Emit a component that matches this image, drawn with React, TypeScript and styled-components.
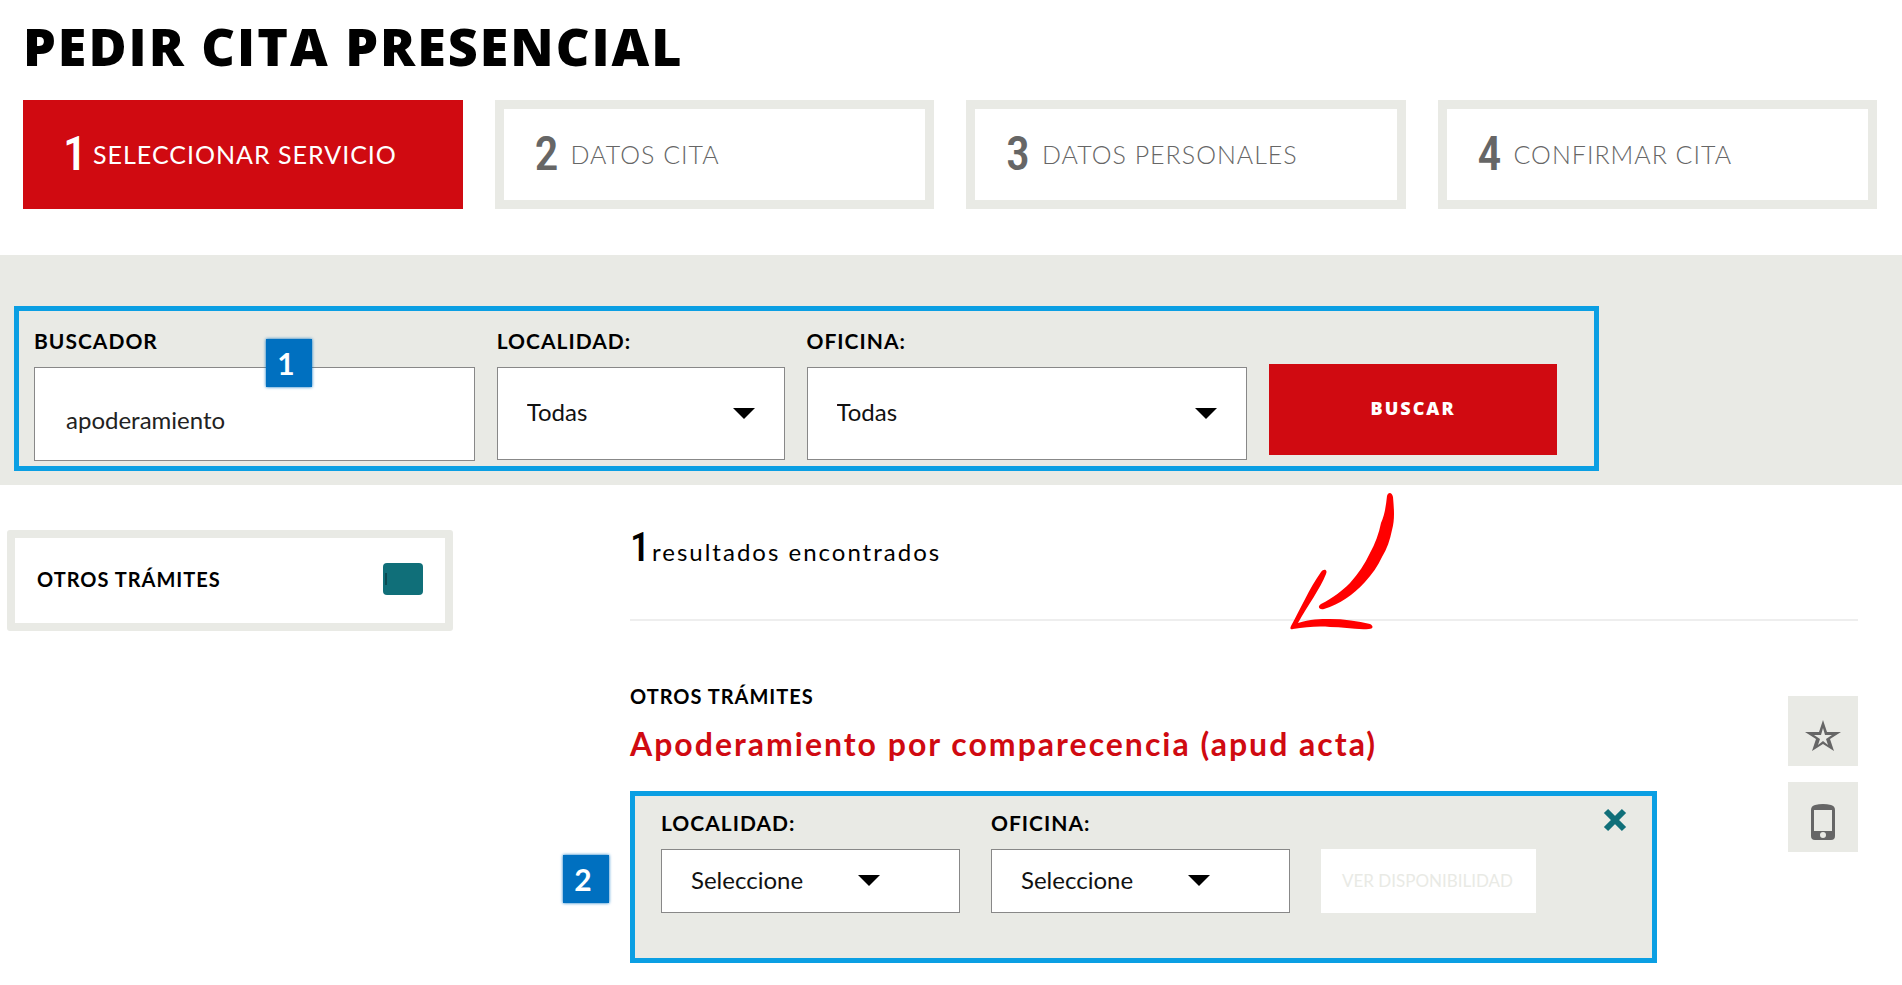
import React from "react";
import styled, { createGlobalStyle } from "styled-components";

const c = {
  red: "#d00a11",
  grey: "#e9eae5",
  blue: "#0b9fe3",
  badge: "#0070c0",
  teal: "#106f79",
  line: "#eeeeee",
  dim: "#666666",
};

const Global = createGlobalStyle`
  *, *::before, *::after { box-sizing: border-box; }
  body {
    margin: 0;
    background: #fff;
    color: #000;
    font-family: Lato, "Open Sans", sans-serif;
  }
  button, input, select { font-family: inherit; }
`;

const Header = styled.header`
  padding: 16px 25px 46px 23px;
`;

const Title = styled.h1`
  margin: 0 0 24px;
  font-family: "Open Sans", Lato, sans-serif;
  font-size: 52px;
  line-height: 60px;
  font-weight: 800;
  letter-spacing: 2px;
`;

const Steps = styled.ol`
  display: grid;
  grid-template-columns: repeat(4, 1fr);
  gap: 32px;
  margin: 0;
  padding: 0;
  list-style: none;
`;

const Step = styled.li<{ $active?: boolean }>`
  display: flex;
  align-items: center;
  gap: ${(p) => (p.$active ? 6 : 12)}px;
  height: 109px;
  padding: 0 0 2px 31px;
  border: 9px solid ${(p) => (p.$active ? c.red : c.grey)};
  background: ${(p) => (p.$active ? c.red : "#fff")};
  color: ${(p) => (p.$active ? "#fff" : c.dim)};
  font-size: 25px;
  font-weight: ${(p) => (p.$active ? 400 : 300)};
  letter-spacing: 1px;
`;

const Numeral = styled.span<{ $size: number }>`
  font-family: "Roboto Condensed", Roboto, sans-serif;
  font-size: ${(p) => p.$size}px;
  font-weight: 500;
  line-height: 36px;
  letter-spacing: 0;
`;

const Band = styled.section`
  padding: 51px 303px 14px 14px;
  background: ${c.grey};
`;

const SearchForm = styled.form`
  position: relative;
  display: grid;
  grid-template-columns: 441fr 288fr 441fr 288fr;
  align-items: start;
  gap: 22px;
  padding: 16px 37px 5px 15px;
  border: 5px solid ${c.blue};
`;

const Field = styled.div`
  display: flex;
  flex-direction: column;
  gap: 12px;
`;

const Label = styled.label`
  font-size: 21px;
  line-height: 28px;
  font-weight: 700;
  letter-spacing: 1px;
`;

const TextInput = styled.input`
  width: 100%;
  height: 94px;
  padding: 10px 31px 0;
  border: 1px solid #888;
  border-radius: 0;
  background: #fff;
  color: #222;
  font-size: 24px;
`;

const SelectBox = styled.div`
  position: relative;
  display: flex;
`;

const Select = styled.select<{ $h: number }>`
  appearance: none;
  width: 100%;
  height: ${(p) => p.$h}px;
  padding: 0 60px 4px 29px;
  border: 1px solid #888;
  border-radius: 0;
  background: #fff;
  color: #111;
  font-size: 24px;
`;

const Caret = styled.svg<{ $right: number }>`
  position: absolute;
  top: 50%;
  right: ${(p) => p.$right}px;
  margin-top: -6px;
  pointer-events: none;
`;

const SearchButton = styled.button`
  height: 91px;
  margin-top: 37px;
  padding-bottom: 4px;
  border: 0;
  background: ${c.red};
  color: #fff;
  font-family: "Open Sans", Lato, sans-serif;
  font-size: 18px;
  font-weight: 800;
  letter-spacing: 2px;
`;

const Badge = styled.span<{ $left: number; $top: number }>`
  position: absolute;
  left: ${(p) => p.$left}px;
  top: ${(p) => p.$top}px;
  display: flex;
  align-items: center;
  justify-content: center;
  width: 46px;
  height: 48px;
  padding-right: 6px;
  background: ${c.badge};
  box-shadow: 0 0 3px ${c.badge};
  color: #fff;
  font-size: 30px;
  font-weight: 700;
`;

const Main = styled.main`
  display: grid;
  grid-template-columns: 446px 1fr;
  align-items: start;
  gap: 177px;
  padding: 45px 44px 22px 7px;
`;

const FilterCard = styled.aside`
  display: flex;
  align-items: center;
  justify-content: space-between;
  height: 101px;
  padding: 0 22px 4px;
  border: 8px solid ${c.grey};
  border-radius: 3px;
`;

const Category = styled.h2`
  margin: 0;
  font-size: 20px;
  line-height: 28px;
  font-weight: 700;
  letter-spacing: 1px;
`;

const Toggle = styled.button`
  display: flex;
  align-items: center;
  width: 40px;
  height: 32px;
  padding: 0 0 0 2px;
  border: 0;
  border-radius: 4px;
  background: ${c.teal};

  &::before {
    content: "";
    width: 2px;
    height: 12px;
    background: #0a4a52;
  }
`;

const Results = styled.section`
  position: relative;
`;

const Count = styled.p`
  display: flex;
  align-items: baseline;
  gap: 2px;
  height: 91px;
  margin: 0;
  border-bottom: 2px solid ${c.line};
  font-size: 24px;
  line-height: 36px;
  letter-spacing: 2px;
`;

const Arrow = styled.svg`
  position: absolute;
  left: 660px;
  top: -37px;
`;

const Item = styled.article`
  display: flex;
  gap: 131px;
  padding-top: 61px;
`;

const ItemBody = styled.div`
  flex: 1;
`;

const ItemTitle = styled.h3`
  margin: 14px 0 27px;
  color: ${c.red};
  font-size: 32px;
  line-height: 40px;
  font-weight: 700;
  letter-spacing: 2px;
`;

const BookingForm = styled.form`
  position: relative;
  display: grid;
  grid-template-columns: 299px 299px 215px;
  align-items: start;
  gap: 31px;
  height: 172px;
  padding: 13px 26px;
  border: 5px solid ${c.blue};
  background: ${c.grey};
`;

const CheckButton = styled.button`
  height: 64px;
  margin-top: 40px;
  padding: 0 2px 2px 0;
  border: 0;
  background: #fff;
  color: ${c.grey};
  font-size: 17px;
`;

const Close = styled.button`
  position: absolute;
  top: 12px;
  right: 25px;
  display: flex;
  padding: 0;
  border: 0;
  background: none;
`;

const Actions = styled.div`
  display: flex;
  flex-direction: column;
  gap: 16px;
  padding-top: 14px;
`;

const Action = styled.button`
  display: flex;
  align-items: center;
  justify-content: center;
  width: 70px;
  height: 70px;
  padding: 10px 0 0;
  border: 0;
  background: ${c.grey};
`;

interface DropdownProps {
  id: string;
  label: string;
  value: string;
  height: number;
  caretRight: number;
}

function Dropdown({ id, label, value, height, caretRight }: DropdownProps) {
  return (
    <Field>
      <Label htmlFor={id}>{label}</Label>
      <SelectBox>
        <Select id={id} $h={height}>
          <option>{value}</option>
        </Select>
        <Caret $right={caretRight} width="22" height="11" viewBox="0 0 22 11" aria-hidden="true">
          <path d="M0 0H22L11 11Z" />
        </Caret>
      </SelectBox>
    </Field>
  );
}

const steps = ["SELECCIONAR SERVICIO", "DATOS CITA", "DATOS PERSONALES", "CONFIRMAR CITA"];

export default function App() {
  return (
    <>
      <Global />
      <Header>
        <Title>PEDIR CITA PRESENCIAL</Title>
        <Steps>
          {steps.map((name, i) => (
            <Step key={name} $active={i === 0} aria-current={i === 0 ? "step" : undefined}>
              <Numeral $size={48}>{i + 1}</Numeral>
              {name}
            </Step>
          ))}
        </Steps>
      </Header>

      <Band>
        <SearchForm onSubmit={(e) => e.preventDefault()}>
          <Field>
            <Label htmlFor="query">BUSCADOR</Label>
            <TextInput id="query" type="text" defaultValue="apoderamiento" />
          </Field>
          <Dropdown id="town" label="LOCALIDAD:" value="Todas" height={93} caretRight={30} />
          <Dropdown id="office" label="OFICINA:" value="Todas" height={93} caretRight={30} />
          <SearchButton type="submit">BUSCAR</SearchButton>
          <Badge $left={247} $top={28}>1</Badge>
        </SearchForm>
      </Band>

      <Main>
        <FilterCard>
          <Category>OTROS TRÁMITES</Category>
          <Toggle type="button" aria-label="Otros trámites" />
        </FilterCard>

        <Results>
          <Count>
            <Numeral $size={40}>1</Numeral>
            resultados encontrados
          </Count>
          <Arrow width="106" height="138" viewBox="0 0 106 138" fill="#ff0000" aria-hidden="true">
            <path d="M97 3C98 -1 102 -1 103 4C104 16 105 26 102 37C100 47 97 56 92 64C88 73 82 81 75 89C63 102 50 111 34 116C29 117 27 114 31 111C43 105 52 98 60 90C68 81 75 71 80 60C85 51 89 40 91 30C95 21 96 12 97 3Z" />
            <path d="M31 79C34 75 38 77 36 81C30 96 18 112 8 130C20 126 30 126 40 126C54 126 68 128 80 131C84 133 83 136 79 136C66 137 53 134 40 134C28 133 16 134 3 136C0 137 0 135 1 133C11 115 19 96 31 79Z" />
          </Arrow>

          <Item>
            <ItemBody>
              <Category>OTROS TRÁMITES</Category>
              <ItemTitle>Apoderamiento por comparecencia (apud acta)</ItemTitle>
              <BookingForm onSubmit={(e) => e.preventDefault()}>
                <Dropdown id="item-town" label="LOCALIDAD:" value="Seleccione" height={64} caretRight={80} />
                <Dropdown id="item-office" label="OFICINA:" value="Seleccione" height={64} caretRight={80} />
                <CheckButton type="submit">VER DISPONIBILIDAD</CheckButton>
                <Close type="button" aria-label="Cerrar">
                  <svg width="24" height="24" viewBox="0 0 24 24" stroke={c.teal} strokeWidth="6">
                    <path d="M3 3L21 21M21 3L3 21" />
                  </svg>
                </Close>
                <Badge $left={-72} $top={59}>2</Badge>
              </BookingForm>
            </ItemBody>
            <Actions>
              <Action type="button" aria-label="Favorito">
                <svg width="36" height="32" viewBox="0 0 36 32">
                  <path
                    fill={c.dim}
                    fillRule="evenodd"
                    d="M18 0L22 12H36L25 19L29 31L18 24L7 31L11 19L0 12H14ZM18 8L16 15H9L15 19L13 25L18 21L23 25L21 19L27 15H20Z"
                  />
                </svg>
              </Action>
              <Action type="button" aria-label="Móvil">
                <svg width="24" height="36" viewBox="0 0 24 36">
                  <path
                    fill={c.dim}
                    fillRule="evenodd"
                    d="M4 1Q12 -1 20 1Q24 2 24 6V32Q24 36 20 36H4Q0 36 0 32V6Q0 2 4 1ZM3 6V27H21V6ZM12 28A3 3 0 1 0 12 34A3 3 0 1 0 12 28Z"
                  />
                </svg>
              </Action>
            </Actions>
          </Item>
        </Results>
      </Main>
    </>
  );
}
